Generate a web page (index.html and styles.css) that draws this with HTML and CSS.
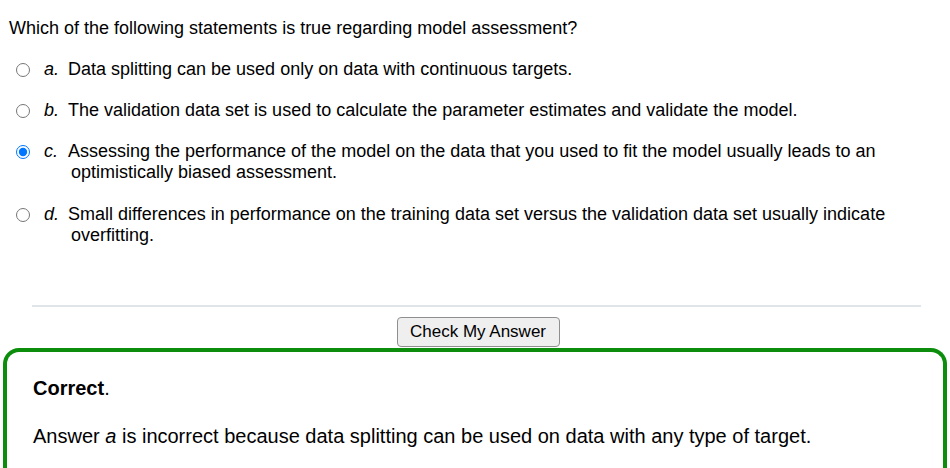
FILE: index.html
```html
<!DOCTYPE html>
<html>
<head>
<meta charset="utf-8">
<link rel="stylesheet" href="styles.css">
</head>
<body>
<div class="page">
  <p class="question">Which of the following statements is true regarding model assessment?</p>
  <div class="options">
    <label class="option">
      <input type="radio" name="q" class="radio">
      <span class="letter">a.</span>
      <span class="text">Data splitting can be used only on data with continuous targets.</span>
    </label>
    <label class="option">
      <input type="radio" name="q" class="radio">
      <span class="letter">b.</span>
      <span class="text">The validation data set is used to calculate the parameter estimates and validate the model.</span>
    </label>
    <label class="option">
      <input type="radio" name="q" class="radio" checked>
      <span class="letter">c.</span>
      <span class="text">Assessing the performance of the model on the data that you used to fit the model usually leads to an optimistically biased assessment.</span>
    </label>
    <label class="option">
      <input type="radio" name="q" class="radio">
      <span class="letter">d.</span>
      <span class="text">Small differences in performance on the training data set versus the validation data set usually indicate overfitting.</span>
    </label>
  </div>
  <hr class="sep">
  <div class="actions">
    <button class="check">Check My Answer</button>
  </div>
  <div class="feedback">
    <p class="fb-title"><strong>Correct</strong>.</p>
    <p class="fb-text">Answer <em>a</em> is incorrect because data splitting can be used on data with any type of target.</p>
  </div>
</div>
</body>
</html>
```
FILE: styles.css
```css
html, body {
  margin: 0;
  padding: 0;
  background: #ffffff;
}
body {
  font-family: "Liberation Sans", Arial, sans-serif;
  font-size: 18px;
  color: #000;
}
.page {
  padding: 0 3px 0 0;
}
.question {
  margin: 18px 0 0 9px;
  line-height: 21px;
}
.options {
  display: flex;
  flex-direction: column;
  gap: 20px;
  margin-top: 20px;
}
.option {
  display: flex;
  align-items: flex-start;
  line-height: 21px;
}
.option:last-child {
  margin-top: 1px;
}
.radio {
  margin: 4px 0 0 16px;
  width: 14px;
  height: 14px;
  flex: none;
}
.letter {
  font-style: italic;
  margin-left: 14px;
  width: 24px;
  flex: none;
}
.text {
  padding-left: 3px;
  text-indent: -3px;
  max-width: 850px;
}
.sep {
  border: 0;
  height: 2px;
  background: #dfe5e9;
  margin: 59px 26px 0 32px;
}
.actions {
  display: flex;
  justify-content: center;
  margin-top: 10px;
  padding-left: 10px;
}
.check {
  font-family: "Liberation Sans", Arial, sans-serif;
  font-size: 17px;
  color: #000;
  background: #efefef;
  border: 1px solid #8f8f8f;
  border-radius: 4px;
  padding: 4px 13px 4px 12px;
  line-height: 20px;
}
.feedback {
  margin: 1px 0 0 3px;
  border: 4px solid #0c8d0c;
  border-bottom: 0;
  border-radius: 16px 16px 0 0;
  padding: 26px 26px 20px 26px;
  height: 200px;
  font-size: 20px;
}
.fb-title {
  margin: 0;
  line-height: 21px;
}
.fb-text {
  margin: 27px 0 0 0;
  line-height: 21px;
}
```
